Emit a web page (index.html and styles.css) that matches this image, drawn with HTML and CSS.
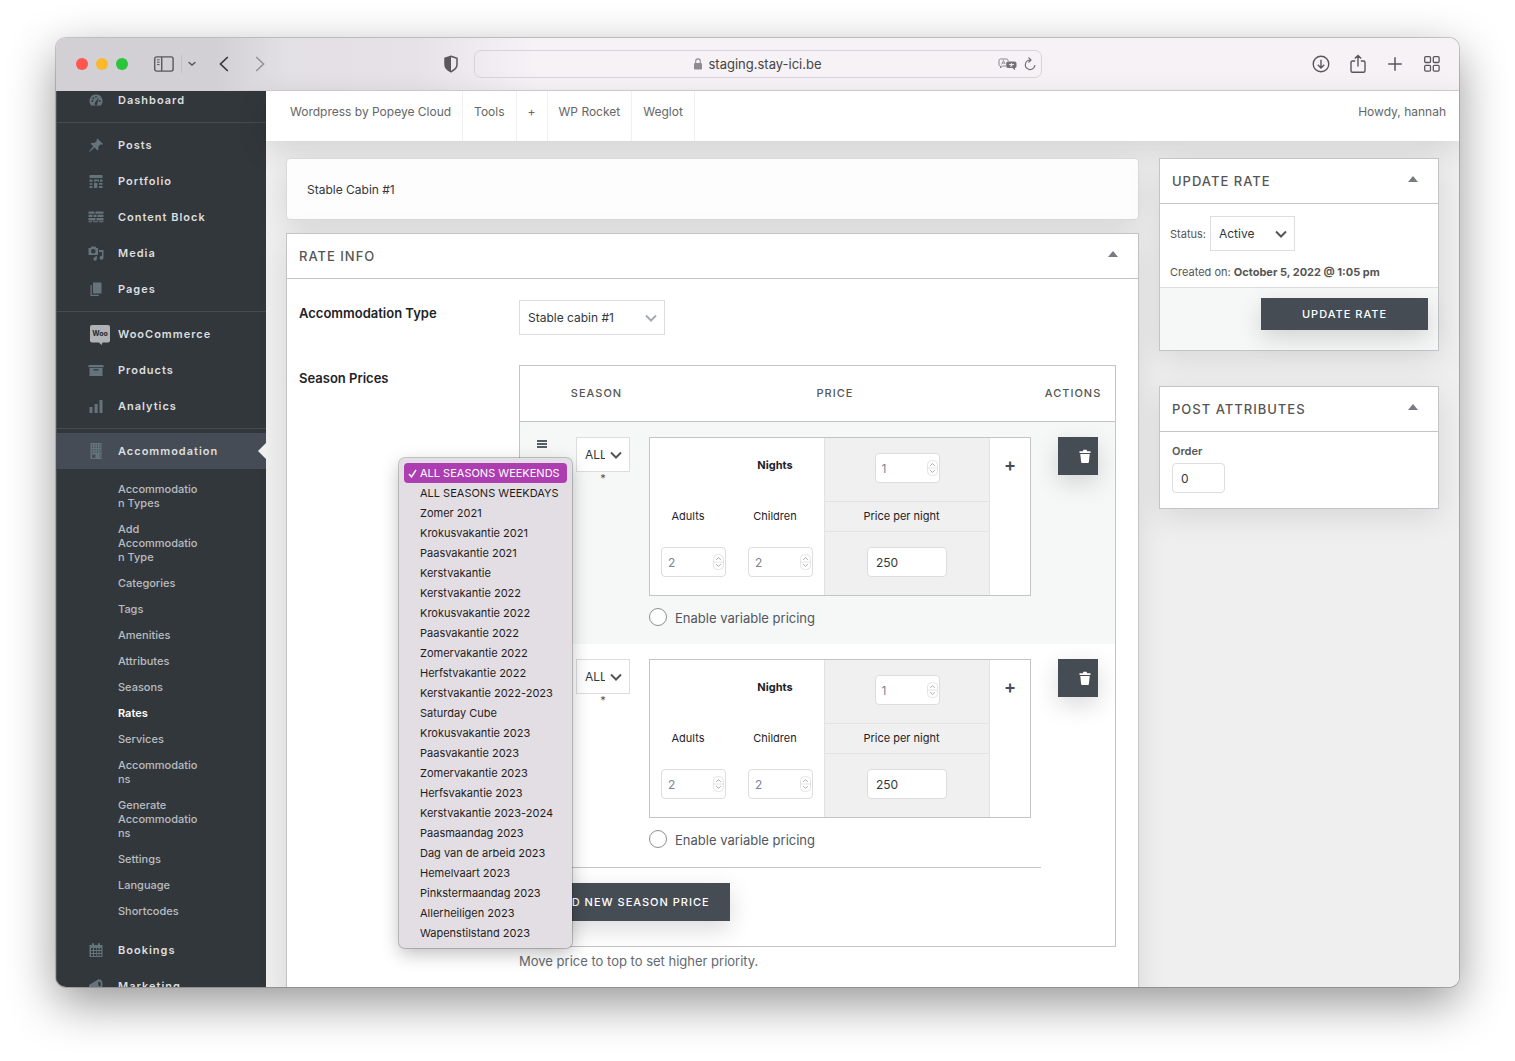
FILE: index.html
```html
<!DOCTYPE html>
<html lang="en">
<head>
    <meta charset="UTF-8">
    <title>Edit Rate</title>
    <link rel="stylesheet" href="styles.css">
</head>
<body>
<svg class="sprite" aria-hidden="true">
    <symbol id="i-chevron" viewBox="0 0 12 12"><path d="M1 3.5 6 8.5 11 3.5" fill="none" stroke="currentColor" stroke-width="2"/></symbol>
    <symbol id="i-spin" viewBox="0 0 11 16"><rect x=".5" y=".5" width="10" height="15" rx="4" fill="#fff" stroke="#e4e4e4"/><path d="M.5 8h10" stroke="#e4e4e4"/><path d="M3.2 5.8 5.5 3.7 7.8 5.8M3.2 10.2 5.5 12.3 7.8 10.2" fill="none" stroke="#aaa"/></symbol>
    <symbol id="i-trash" viewBox="0 0 12 14"><path d="M.5 2.2h3.2L4.5.8h3l.8 1.4h3.2V4H.5zM1.3 5h9.4l-.8 8q-.1.9-1 .9H3.1q-.9 0-1-.9z" fill="currentColor"/></symbol>
</svg>

<div class="window">
    <header class="toolbar">
        <div class="toolbar-left">
            <span class="light red"></span>
            <span class="light yellow"></span>
            <span class="light green"></span>
            <svg class="tb-sidebar" width="20" height="16" viewBox="0 0 20 16" fill="none" stroke="currentColor" stroke-width="1.4"><rect x=".7" y=".9" width="18.4" height="14.2" rx="2"/><path d="M7.7 1v14"/><path d="M3 3.8h2.6M3 6.2h2.6M3 8.6h2.6" stroke-width="1"/></svg>
            <span class="tb-line"></span>
            <svg class="tb-down" width="8" height="6" viewBox="0 0 8 6" fill="none" stroke="currentColor" stroke-width="1.5" stroke-linecap="round"><path d="M1 1.5 4 4l3-2.5"/></svg>
            <svg class="tb-back" width="10" height="16" viewBox="0 0 10 16" fill="none" stroke="currentColor" stroke-width="1.7" stroke-linecap="round"><path d="M8.3 1.5 1.5 8l6.8 6.5"/></svg>
            <svg class="tb-forward" width="10" height="16" viewBox="0 0 10 16" fill="none" stroke="currentColor" stroke-width="1.7" stroke-linecap="round"><path d="M1.7 1.5 8.5 8l-6.8 6.5"/></svg>
            <svg class="tb-shield" width="16" height="18" viewBox="0 0 16 18"><path d="M8 1.3 14 3.4v6.2c0 3.2-2.4 5.5-6 7.1-3.6-1.6-6-3.900-6-7.100V3.400z" fill="none" stroke="currentColor" stroke-width="1.5"/><path d="M8 1.3 2 3.4v6.2c0 3.2 2.4 5.5 6 7.1z" fill="currentColor"/></svg>
        </div>
        <div class="address">
            <svg width="10" height="12" viewBox="0 0 10 12"><rect x="1" y="5" width="8" height="6.5" rx="1" fill="#8e8b90"/><path d="M2.7 5V3.2a2.3 2.3 0 0 1 4.6 0V5" fill="none" stroke="#8e8b90" stroke-width="1.1"/></svg>
            <span>staging.stay-ici.be</span>
            <div class="address-icons">
                <svg width="19" height="13" viewBox="0 0 19 13"><path d="M10 3V2.5Q10 1 8.5 1h-6Q1 1 1 2.5v4Q1 8 2.5 8v2L4.5 8H8" fill="none" stroke="#858288"/><path d="M3.5 6.5 5.5 2.5 7 6M4.2 5h2.5" fill="none" stroke="#858288" stroke-width=".8"/><path d="M10 3.5h6.5q2 0 2 1.8v3q0 1.7-1.5 1.7v2.3L14.5 10H10q-1.8 0-1.8-1.7v-3Q8.2 3.5 10 3.5z" fill="#747177"/><path d="M11 6.5h5M13.5 5v3.5M12 8.500l3-2" stroke="#eee" stroke-width=".9"/></svg>
                <svg width="12" height="14" viewBox="0 0 12 14" fill="none" stroke="#747177" stroke-width="1.2"><path d="M6.5 3A4.8 4.8 0 1 0 10.9 8M4.5.5 7 3 4.5 5.5"/></svg>
            </div>
        </div>
        <div class="toolbar-right">
            <svg width="18" height="18" viewBox="0 0 18 18" fill="none" stroke="currentColor" stroke-width="1.4"><circle cx="9" cy="9" r="7.8"/><path d="M9 4.800v8M5.800 9.700 9 12.900l3.200-3.200"/></svg>
            <svg width="18" height="20" viewBox="0 0 18 20" fill="none" stroke="currentColor" stroke-width="1.4"><path d="M6.2 7H3.500Q2 7 2 8.500v8.300q0 1.500 1.500 1.500h11q1.500 0 1.500-1.500V8.500Q16 7 14.500 7h-2.700M9 12.500V1.500M5.800 4.500 9 1.400l3.200 3.100"/></svg>
            <svg width="18" height="18" viewBox="0 0 18 18" stroke="currentColor" stroke-width="1.5"><path d="M9 2.200v13.600M2.200 9h13.600"/></svg>
            <svg width="18" height="18" viewBox="0 0 18 18" fill="none" stroke="currentColor" stroke-width="1.3"><rect x="1.7" y="1.7" width="5.800" height="5.800" rx="1"/><rect x="10.300" y="1.700" width="5.800" height="5.800" rx="1"/><rect x="1.700" y="10.300" width="5.800" height="5.800" rx="1"/><rect x="10.300" y="10.300" width="5.800" height="5.800" rx="1"/></svg>
        </div>
    </header>

    <div class="admin">
        <nav class="sidebar">
            <ul class="menu">
                <li><a href="#"><svg viewBox="0 0 16 16"><path d="M8 2.500a6.500 6.500 0 0 0-5.600 9.800l.7 1.200h9.800l.7-1.200A6.500 6.500 0 0 0 8 2.500z"/><g fill="#32373c"><circle cx="4.300" cy="9" r="1"/><circle cx="5.300" cy="6.200" r="1"/><circle cx="8" cy="4.800" r=".9"/><circle cx="11.800" cy="9" r="1"/><path d="m10.700 5.200-1.200 6a1.500 1.500 0 1 1-2.400-.7z"/></g></svg>Dashboard</a></li>
                <li class="sep"></li>
                <li><a href="#"><svg viewBox="0 0 16 16"><path d="M9.500 1.500 15 7l-1 .7-1.300-.4-2.500 2.500.3 2.700-1 .9-2.900-2.900L1.500 15 1 14.500 5.300 9.300 2.700 6.800l1-1 2.700.3L8.900 3.700 8.500 2.500z"/></svg>Posts</a></li>
                <li><a href="#"><svg viewBox="0 0 16 16"><path d="M1.500 2h13v3h-13zM1.500 6.500h3v2.300h-3zM6 6.500h5v2.300H9.800V8H7.500v.8H6zM12 6.500h2.500v2.300H12zM1.500 10.200h3v1.600h-3zM6 9.800h3.300V15H6zM11 10h3.500v1.800H11zM1.500 13h3v2h-3zM11 13h3.500v2H11z"/></svg>Portfolio</a></li>
                <li><a href="#"><svg viewBox="0 0 16 16"><path d="M.5 2.500h6v2.300h-6zM7.500 2.500h8v2.300h-8zM.5 5.800h4v2.300h-4zM5.500 5.800h3v2.300h-3zM9.500 5.800h6v2.300h-6zM.5 9.100h7v2.300h-7zM8.500 9.100h7v2.300h-7zM.5 12.300h3.500v1H.5zM5 12.300h5v1H5zM11 12.300h4.500v1H11z"/></svg>Content Block</a></li>
                <li><a href="#"><svg viewBox="0 0 16 16"><path fill-rule="evenodd" d="M.5 3h2l1-1.500h4L8.500 3h1.500v7H.5zM5.300 4a2.300 2.300 0 1 0 0 4.600 2.300 2.300 0 0 0 0-4.600zM11 5h4.500v7.800a1.900 1.900 0 1 1-1.500-1.900V7H11zM8.800 11v3a1.700 1.700 0 1 1-1.300-1.700V11z"/></svg>Media</a></li>
                <li><a href="#"><svg viewBox="0 0 16 16"><path d="M5 1.500h8.500v11H5zM2.500 4h1.300v9.700h7V15H2.500z"/></svg>Pages</a></li>
                <li class="sep"></li>
                <li><a href="#"><svg class="woo" viewBox="0 0 20 20"><path d="M2 0h16q2 0 2 2v13.500q0 2-2 2h-5.500L11.500 20 9 17.500H2q-2 0-2-2V2q0-2 2-2z" fill="#b0b2b5"/><text x="10" y="11">Woo</text></svg>WooCommerce</a></li>
                <li><a href="#"><svg viewBox="0 0 16 16"><path fill-rule="evenodd" d="M.5 3h15v2.200H.5zM1.500 6h13v8h-13zM5.500 7.300v1.200h5V7.300z"/></svg>Products</a></li>
                <li><a href="#"><svg viewBox="0 0 16 16"><path d="M1.500 9h3v6h-3zM6.500 6h3.200v9H6.500zM11.500 2h3v13h-3z"/></svg>Analytics</a></li>
                <li class="sep"></li>
                <li class="current"><a href="#"><svg viewBox="0 0 16 16"><path d="M2.500 0h11v16h-11z"/><g stroke="#454c55" stroke-dasharray="1.500 1"><path d="M4.500 1v10M7 1v10M9.500 1v10M12 1v14"/></g><path d="M4 11.500h3.500V15H4z" fill="#454c55"/></svg>Accommodation</a>
                    <ul class="submenu">
                        <li><a href="#">Accommodation Types</a></li>
                        <li><a href="#">Add Accommodation Type</a></li>
                        <li><a href="#">Categories</a></li>
                        <li><a href="#">Tags</a></li>
                        <li><a href="#">Amenities</a></li>
                        <li><a href="#">Attributes</a></li>
                        <li><a href="#">Seasons</a></li>
                        <li><a class="active" href="#">Rates</a></li>
                        <li><a href="#">Services</a></li>
                        <li><a href="#">Accommodations</a></li>
                        <li><a href="#">Generate Accommodations</a></li>
                        <li><a href="#">Settings</a></li>
                        <li><a href="#">Language</a></li>
                        <li><a href="#">Shortcodes</a></li>
                    </ul>
                </li>
                <li><a href="#"><svg viewBox="0 0 16 16"><path fill-rule="evenodd" d="M1.500 3H4V1.300h2V3h4V1.300h2V3h2.500v12h-13zM3 6v2h2V6zM6 6v2h2V6zM8.800 6v2h1.800V6zM11.500 6v2h1.800V6zM3 9v2h2V9zM6 9v2h2V9zM8.800 9v2h1.800V9zM11.500 9v2h1.800V9zM3 12v2h2v-2zM6 12v2h2v-2zM8.800 12v2h1.800v-2zM11.500 12v2h1.800v-2z"/></svg>Bookings</a></li>
                <li><a href="#"><svg viewBox="0 0 16 16"><path fill-rule="evenodd" d="M10.500 1.200q4 0 4 5t-3 5.500L7 11l-.5 4H4l-.5-4.500-2.500-.8V7zM11 3.500q-1 0-.8 2.500t1.500 2.500 1.200-2.500T11 3.500z"/></svg>Marketing</a></li>
            </ul>
        </nav>

        <div class="main">
            <div class="adminbar">
                <a href="#">Wordpress by Popeye Cloud</a>
                <a href="#">Tools</a>
                <a href="#">+</a>
                <a href="#">WP Rocket</a>
                <a href="#">Weglot</a>
                <a class="account" href="#">Howdy, hannah</a>
            </div>

            <div class="content">
                <div class="column">
                    <input class="title" type="text" value="Stable Cabin #1" aria-label="Title">

                    <section class="postbox">
                        <h2>Rate Info <span class="toggle"></span></h2>
                        <div class="fields">
                            <label class="field-label" for="type">Accommodation Type</label>
                            <div class="field">
                                <span class="select muted type-select">
                                    <select id="type"><option>Stable cabin #1</option></select>
                                    <svg><use href="#i-chevron"/></svg>
                                </span>
                            </div>
                            <div class="field-label">Season Prices</div>
                            <div class="field">
                                <table class="seasons">
                                    <thead>
                                        <tr><th class="c-handle"></th><th class="c-season">Season</th><th>Price</th><th class="c-actions">Actions</th></tr>
                                    </thead>
                                    <tbody>
                                        <tr class="alt">
                                            <td><span class="handle"></span></td>
                                            <td class="season">
                                                <div class="picker">
                                                    <span class="select">
                                                        <select aria-label="Season"><option>ALL SEASONS WEEKENDS</option></select>
                                                        <svg><use href="#i-chevron"/></svg>
                                                    </span>
                                                    <span class="required">*</span>
                                                    <ul class="options" role="listbox">
                                                        <li role="option" class="selected"><svg width="9" height="9" viewBox="0 0 9 9"><path d="M1 5 3.500 7.800 8 1" fill="none" stroke="#fff" stroke-width="1.500"/></svg>ALL SEASONS WEEKENDS</li>
                                                        <li role="option">ALL SEASONS WEEKDAYS</li>
                                                        <li role="option">Zomer 2021</li>
                                                        <li role="option">Krokusvakantie 2021</li>
                                                        <li role="option">Paasvakantie 2021</li>
                                                        <li role="option">Kerstvakantie</li>
                                                        <li role="option">Kerstvakantie 2022</li>
                                                        <li role="option">Krokusvakantie 2022</li>
                                                        <li role="option">Paasvakantie 2022</li>
                                                        <li role="option">Zomervakantie 2022</li>
                                                        <li role="option">Herfstvakantie 2022</li>
                                                        <li role="option">Kerstvakantie 2022-2023</li>
                                                        <li role="option">Saturday Cube</li>
                                                        <li role="option">Krokusvakantie 2023</li>
                                                        <li role="option">Paasvakantie 2023</li>
                                                        <li role="option">Zomervakantie 2023</li>
                                                        <li role="option">Herfsvakantie 2023</li>
                                                        <li role="option">Kerstvakantie 2023-2024</li>
                                                        <li role="option">Paasmaandag 2023</li>
                                                        <li role="option">Dag van de arbeid 2023</li>
                                                        <li role="option">Hemelvaart 2023</li>
                                                        <li role="option">Pinkstermaandag 2023</li>
                                                        <li role="option">Allerheiligen 2023</li>
                                                        <li role="option">Wapenstilstand 2023</li>
                                                    </ul>
                                                </div>
                                            </td>
                                            <td class="price">
                                                <table class="rates">
                                                    <tr><td></td><th class="nights">Nights</th><td class="grey"><span class="number"><input type="number" value="1" aria-label="Nights"><svg><use href="#i-spin"/></svg></span></td><td class="add"><button type="button" aria-label="Add period">+</button></td></tr>
                                                    <tr><th>Adults</th><th>Children</th><th class="grey">Price per night</th><td class="add"></td></tr>
                                                    <tr><td><span class="number"><input type="number" value="2" aria-label="Adults"><svg><use href="#i-spin"/></svg></span></td><td><span class="number"><input type="number" value="2" aria-label="Children"><svg><use href="#i-spin"/></svg></span></td><td class="grey"><input class="amount" type="text" value="250" aria-label="Price per night"></td><td class="add"></td></tr>
                                                </table>
                                                <label class="variable"><input type="checkbox">Enable variable pricing</label>
                                            </td>
                                            <td class="actions"><button class="btn delete" type="button" aria-label="Delete"><svg><use href="#i-trash"/></svg></button></td>
                                        </tr>
                                        <tr class="last">
                                            <td></td>
                                            <td class="season">
                                                <div class="picker">
                                                    <span class="select">
                                                        <select aria-label="Season"><option>ALL SEASONS WEEKDAYS</option></select>
                                                        <svg><use href="#i-chevron"/></svg>
                                                    </span>
                                                    <span class="required">*</span>
                                                </div>
                                            </td>
                                            <td class="price">
                                                <table class="rates">
                                                    <tr><td></td><th class="nights">Nights</th><td class="grey"><span class="number"><input type="number" value="1" aria-label="Nights"><svg><use href="#i-spin"/></svg></span></td><td class="add"><button type="button" aria-label="Add period">+</button></td></tr>
                                                    <tr><th>Adults</th><th>Children</th><th class="grey">Price per night</th><td class="add"></td></tr>
                                                    <tr><td><span class="number"><input type="number" value="2" aria-label="Adults"><svg><use href="#i-spin"/></svg></span></td><td><span class="number"><input type="number" value="2" aria-label="Children"><svg><use href="#i-spin"/></svg></span></td><td class="grey"><input class="amount" type="text" value="250" aria-label="Price per night"></td><td class="add"></td></tr>
                                                </table>
                                                <label class="variable"><input type="checkbox">Enable variable pricing</label>
                                            </td>
                                            <td class="actions"><button class="btn delete" type="button" aria-label="Delete"><svg><use href="#i-trash"/></svg></button></td>
                                        </tr>
                                    </tbody>
                                    <tfoot>
                                        <tr><td colspan="4"><button class="btn add-season" type="button">Add New Season Price</button></td></tr>
                                    </tfoot>
                                </table>
                                <p class="help">Move price to top to set higher priority.</p>
                            </div>
                        </div>
                    </section>
                </div>

                <aside class="side">
                    <section class="postbox">
                        <h2>Update Rate <span class="toggle"></span></h2>
                        <div class="publish">
                            <div class="status">
                                <label for="status">Status:</label>
                                <span class="select status-select">
                                    <select id="status"><option>Active</option></select>
                                    <svg><use href="#i-chevron"/></svg>
                                </span>
                            </div>
                            <p>Created on: <b>October 5, 2022 @ 1:05 pm</b></p>
                        </div>
                        <div class="publish-actions"><button class="btn update" type="button">Update Rate</button></div>
                    </section>

                    <section class="postbox">
                        <h2>Post Attributes <span class="toggle"></span></h2>
                        <div class="attributes">
                            <label for="order">Order</label>
                            <input id="order" type="text" value="0">
                        </div>
                    </section>
                </aside>
            </div>
        </div>
    </div>
</div>
</body>
</html>
```

FILE: styles.css
```css
* {
    box-sizing: border-box;
}

body {
    margin: 0;
    padding: 38px 56px 74px;
    height: 100vh;
    overflow: hidden;
    background: #fff;
    font-family: Inter, "Liberation Sans", sans-serif;
    font-size: 11px;
    color: #555;
}

ul {
    list-style: none;
    margin: 0;
    padding: 0;
}

a {
    color: inherit;
    text-decoration: none;
}

button, input, select {
    font: inherit;
}

.sprite {
    position: absolute;
    width: 0;
    height: 0;
}

.window {
    display: flex;
    flex-direction: column;
    height: 100%;
    overflow: hidden;
    border-radius: 10px;
    box-shadow: 0 0 0 1px rgba(0, 0, 0, 0.18), 0 16px 48px rgba(0, 0, 0, 0.42);
}

/* browser toolbar */
.toolbar {
    flex: none;
    display: grid;
    grid-template-columns: 1fr 568px 1fr;
    align-items: center;
    height: 53px;
    border-bottom: 1px solid #d3cfd3;
    background: linear-gradient(90deg, #d2cfd5 0, #d2cfd5 160px, #e3e0e5 230px, #e6e2e7 360px, #f7f2f6 480px);
    color: #5a575c;
}

.toolbar-left {
    display: flex;
    align-items: center;
    padding: 0 15px 0 20px;
}

.light {
    width: 12px;
    height: 12px;
    margin-right: 8px;
    border-radius: 50%;
}

.red {
    background: #ff5750;
}

.yellow {
    background: #fdb92a;
}

.green {
    background: #29c53d;
}

.tb-sidebar {
    margin-left: 18px;
}

.tb-line {
    width: 1px;
    height: 18px;
    margin: 0 6px 0 7px;
    background: #c3c0c6;
}

.tb-back {
    margin-left: 23px;
    color: #38363a;
}

.tb-forward {
    margin-left: 26px;
    color: #98959a;
}

.tb-shield {
    margin-left: auto;
}

.address {
    display: flex;
    align-items: center;
    justify-content: center;
    gap: 5px;
    position: relative;
    height: 28px;
    border: 1px solid #d7d2d7;
    border-radius: 7px;
    font-size: 13px;
    color: #444;
}

.address-icons {
    display: flex;
    align-items: center;
    gap: 7px;
    position: absolute;
    right: 5px;
}

.toolbar-right {
    display: flex;
    justify-content: flex-end;
    align-items: center;
    gap: 19px;
    padding-right: 18px;
}

.admin {
    flex: 1;
    display: flex;
    min-height: 0;
}

/* admin menu */
.sidebar {
    flex: none;
    width: 210px;
    overflow: hidden;
    border-left: 1px solid #4b5156;
    background: #32373c;
    color: #dcdedf;
}

.menu {
    margin-top: -9px;
}

.menu > li > a {
    display: flex;
    align-items: center;
    gap: 14px;
    height: 36px;
    padding-left: 31px;
    font-weight: 600;
    letter-spacing: 1px;
}

.menu svg {
    width: 16px;
    height: 16px;
    fill: #65737b;
}

.menu .woo {
    width: 20px;
    height: 20px;
    margin: 2px -6px 0 2px;
}

.woo text {
    fill: #32373c;
    font-size: 7px;
    font-weight: 800;
    letter-spacing: 0;
    text-anchor: middle;
}

.sep {
    height: 1px;
    margin: 4px 0;
    background: #464b50;
}

.current > a {
    position: relative;
    background: #454c55;
}

.current > a::after {
    content: "";
    position: absolute;
    right: 0;
    border: 8px solid transparent;
    border-left: 0;
    border-right-color: #efefef;
}

.submenu {
    padding: 7px 62px 8px 61px;
    font-weight: 500;
    line-height: 14px;
    color: #b9bdc0;
}

.submenu a {
    display: block;
    padding: 6px 0;
    overflow-wrap: anywhere;
}

.submenu .active {
    color: #fff;
    font-weight: 600;
}

.main {
    flex: 1;
    min-width: 0;
    background: #efefef;
}

.adminbar {
    display: flex;
    height: 50px;
    padding-left: 13px;
    background: #fff;
    box-shadow: 0 8px 30px rgba(0, 0, 0, 0.12);
    font-size: 12px;
    line-height: 42px;
    color: #666;
}

.adminbar a {
    padding: 0 11px;
    border-right: 1px solid #f1f1f1;
}

.adminbar .account {
    margin-left: auto;
    padding-right: 13px;
    border: 0;
}

.content {
    display: flex;
    align-items: flex-start;
    gap: 20px;
    padding: 17px 20px 0;
}

.column {
    flex: 1;
    min-width: 0;
}

.title {
    display: block;
    width: 100%;
    height: 62px;
    margin-bottom: 13px;
    padding: 0 20px;
    border: 1px solid #d9d9d9;
    border-radius: 4px;
    background: #fdfdfd;
    font-size: 12px;
    color: #32373c;
    box-shadow: 0 8px 30px rgba(0, 0, 0, 0.1);
}

.postbox {
    border: 1px solid #c3c4c7;
    background: #fff;
    box-shadow: 0 8px 30px rgba(0, 0, 0, 0.1);
}

.postbox h2 {
    display: flex;
    justify-content: space-between;
    align-items: center;
    height: 45px;
    margin: 0;
    padding: 0 20px 1px 12px;
    border-bottom: 1px solid #c3c4c7;
    font-size: 13px;
    font-weight: 500;
    letter-spacing: 1px;
    text-transform: uppercase;
}

.toggle {
    margin-bottom: 3px;
    border: 5px solid transparent;
    border-top: 0;
    border-bottom: 6px solid #787c82;
}

.fields {
    display: grid;
    grid-template-columns: 220px 1fr;
    row-gap: 30px;
    padding: 21px 22px 30px 12px;
}

.field-label {
    padding-top: 5px;
    font-size: 13px;
    font-weight: 600;
    color: #1d2327;
}

/* form controls */
.select {
    display: block;
    position: relative;
    height: 35px;
}

.select select {
    width: 100%;
    height: 100%;
    padding: 0 24px 0 8px;
    appearance: none;
    border: 1px solid #ddd;
    border-radius: 0;
    background: #fff;
    font-size: 12px;
    color: #32373c;
}

.select svg {
    position: absolute;
    right: 8px;
    top: 12px;
    width: 12px;
    height: 12px;
    color: #555;
    pointer-events: none;
}

.muted svg {
    color: #a7aaad;
}

.type-select {
    width: 146px;
}

.number {
    display: block;
    position: relative;
    width: 65px;
    margin: 0 auto;
}

.number input, .amount, .attributes input {
    display: block;
    width: 100%;
    height: 30px;
    padding: 0 8px;
    border: 1px solid #ddd;
    border-radius: 4px;
    background: #fff;
    font-size: 12px;
    color: #32373c;
}

.number input {
    padding: 0 6px;
    appearance: textfield;
    color: #7b8494;
}

.number svg {
    position: absolute;
    right: 2px;
    top: 7px;
    width: 11px;
    height: 16px;
}

.btn {
    border: 0;
    background: #464c54;
    box-shadow: 0 8px 24px rgba(0, 0, 0, 0.15);
    color: #fff;
    font-weight: 500;
    letter-spacing: 1px;
    text-transform: uppercase;
}

/* season prices */
.seasons {
    width: 100%;
    table-layout: fixed;
    border-collapse: separate;
    border-spacing: 0;
    border: 1px solid #c3c4c7;
}

.seasons td, .seasons th {
    padding: 0;
    vertical-align: top;
}

.seasons > thead th {
    height: 56px;
    padding-bottom: 1px;
    border-bottom: 1px solid #c3c4c7;
    vertical-align: middle;
    font-weight: 500;
    letter-spacing: 1px;
    text-transform: uppercase;
}

.c-handle {
    width: 44px;
}

.c-season {
    width: 65px;
}

.seasons .c-actions {
    width: 74px;
    padding-right: 10px;
}

.seasons > tbody > tr {
    height: 222px;
}

.seasons > tbody > .last {
    height: 224px;
}

.seasons > tbody > tr > td {
    padding-top: 15px;
}

.alt {
    background: #f6f7f7;
}

.last > td {
    border-bottom: 1px solid #c3c4c7;
}

.last > .actions {
    border-bottom: 0;
}

.handle {
    display: block;
    width: 10px;
    height: 8px;
    margin: 3px auto 0;
    border: solid #555d66;
    border-width: 2px 0;
    background: linear-gradient(#555d66, #555d66) center / 100% 2px no-repeat;
    background-origin: border-box;
}

.seasons .season {
    padding-left: 12px;
}

.picker {
    position: relative;
    width: 54px;
    text-align: center;
}

.required {
    display: block;
    line-height: 12px;
}

.options {
    position: absolute;
    z-index: 5;
    left: -177px;
    top: 21px;
    width: 173px;
    padding: 5px;
    border-radius: 6px;
    background: #e3dee4;
    box-shadow: 0 0 0 1px rgba(0, 0, 0, 0.2), 0 6px 18px rgba(0, 0, 0, 0.25);
    color: #1f1d20;
    text-align: left;
    white-space: nowrap;
}

.options li {
    position: relative;
    height: 20px;
    padding-left: 16px;
    border-radius: 4px;
    line-height: 20px;
}

.options .selected {
    background: #ad3eb1;
    color: #fff;
}

.options svg {
    position: absolute;
    left: 4px;
    top: 6px;
}

.seasons .price {
    padding-left: 20px;
    padding-right: 10px;
}

.rates {
    width: 100%;
    height: 159px;
    border: 1px solid #c3c4c7;
    border-collapse: separate;
    border-spacing: 0;
    table-layout: fixed;
    background: #fff;
    text-align: center;
    color: #1d2327;
}

.rates tr {
    height: 63px;
}

.rates tr:nth-child(2) {
    height: 31px;
}

.seasons .rates td, .seasons .rates th {
    width: 87px;
    padding-bottom: 3px;
    vertical-align: middle;
    font-weight: 400;
}

.seasons .rates th {
    padding-right: 11px;
    padding-bottom: 2px;
}

.seasons .rates .nights {
    padding-bottom: 10px;
    font-weight: 700;
}

.seasons .rates .grey {
    width: auto;
    border: solid #e3e3e3;
    border-width: 0 1px;
    background: #f0f0f0;
}

.seasons .rates tr:nth-child(2) .grey {
    border-width: 1px;
}

.seasons .rates .add {
    width: 40px;
    padding-bottom: 10px;
}

.add button {
    padding: 0;
    border: 0;
    background: none;
    font-size: 18px;
    font-weight: 600;
    line-height: 20px;
    color: #464c54;
}

.amount {
    width: 80px;
    margin: 0 auto;
}

.variable {
    display: flex;
    align-items: flex-end;
    gap: 8px;
    margin-top: 12px;
    font-size: 13px;
    color: #50575e;
}

.variable input {
    width: 18px;
    height: 18px;
    margin: 0;
    appearance: none;
    border: 1px solid #8c8f94;
    border-radius: 50%;
    background: #fff;
}

.delete {
    display: flex;
    align-items: center;
    justify-content: flex-end;
    width: 40px;
    height: 38px;
    margin-left: 17px;
    padding: 0 7px 0 0;
}

.delete svg {
    width: 12px;
    height: 14px;
}

.seasons > tfoot td {
    padding: 15px 14px 25px;
}

.add-season {
    height: 38px;
    padding: 0 20px;
}

.help {
    margin: 5px 0 0;
    font-size: 13px;
    line-height: 18px;
    color: #646970;
}

/* right column */
.side {
    flex: none;
    display: grid;
    gap: 35px;
    width: 280px;
}

.publish {
    padding: 12px 10px 8px;
}

.publish p {
    margin: 14px 0 0;
    line-height: 14px;
}

.status {
    display: flex;
    align-items: center;
    gap: 4px;
}

.status-select {
    width: 85px;
}

.publish-actions {
    padding: 10px 10px 20px;
    border-top: 1px solid #dcdcde;
    background: #f6f7f7;
    text-align: right;
}

.update {
    width: 167px;
    height: 32px;
}

.attributes {
    padding: 12px 12px 15px;
}

.attributes label {
    display: block;
    margin-bottom: 5px;
    line-height: 14px;
    font-weight: 600;
}

.attributes input {
    width: 53px;
}
```
